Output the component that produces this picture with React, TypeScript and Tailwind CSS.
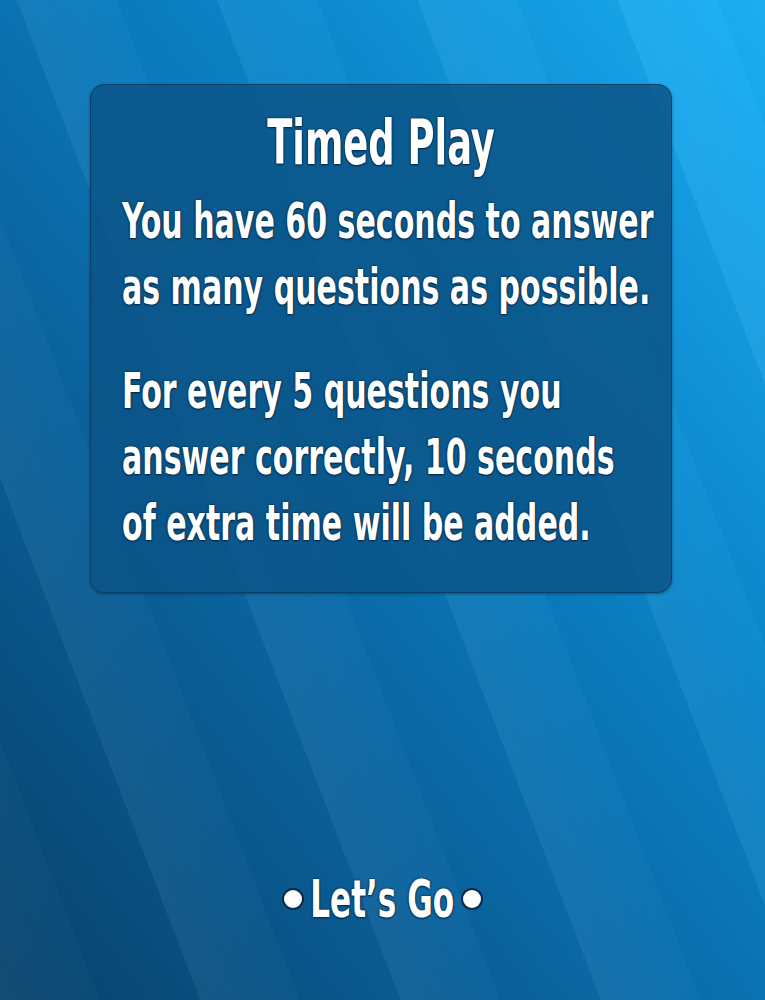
import React from 'react';

const outline = '[text-shadow:0_0_2px_#062a48,0_0_2px_#062a48,0_1px_2px_#062a48]';

export default function App() {
  const paragraphs = [
    ['You have 60 seconds to answer', 'as many questions as possible.'],
    ['For every 5 questions you', 'answer correctly, 10 seconds', 'of extra time will be added.'],
  ];

  return (
    <div className="relative w-full h-[1000px] overflow-hidden bg-[linear-gradient(to_bottom_left,#1cb2f7_0%,#0a86cb_35%,#0a64a0_65%,#07426c_100%)] font-['DejaVu_Sans_Condensed','DejaVu_Sans',sans-serif] font-bold text-white">
      {/* diagonal light stripes */}
      <div className="absolute inset-0 bg-[repeating-linear-gradient(69deg,rgba(255,255,255,0.05)_0px,rgba(255,255,255,0.015)_93px,rgba(0,0,0,0.025)_93px,rgba(0,0,0,0.025)_187px)]" />

      <div className="relative flex flex-col">
        {/* Rules card */}
        <div className="mt-[84px] ml-[90px] w-[582px] h-[509px] rounded-[14px] border border-[#073f66] bg-[#0a5386]/85 shadow-[0_1px_3px_rgba(0,20,40,0.4)] pt-[26px] pl-[31px]">
          <div className={`text-center text-[63px] leading-[64px] whitespace-nowrap scale-x-[0.65] -ml-[31px] ${outline}`}>
            Timed Play
          </div>

          <div className="mt-[13px] flex flex-col gap-[38px]">
            {paragraphs.map((lines, i) => (
              <div key={i}>
                {lines.map((line) => (
                  <div key={line} className={`text-[50px] leading-[66px] whitespace-nowrap origin-left scale-x-[0.668] ${outline}`}>
                    {line}
                  </div>
                ))}
              </div>
            ))}
          </div>
        </div>

        {/* Start button */}
        <button className="mt-[280px] self-center flex items-center gap-[10px] cursor-pointer">
          <span className="w-[18px] h-[18px] rounded-full bg-white shadow-[0_0_0_2px_#062a48]" />
          <span className={`inline-block text-[52px] leading-[52px] whitespace-nowrap scale-x-[0.665] -mx-[38px] ${outline}`}>
            Let’s Go
          </span>
          <span className="w-[18px] h-[18px] rounded-full bg-white shadow-[0_0_0_2px_#062a48]" />
        </button>
      </div>
    </div>
  );
}
